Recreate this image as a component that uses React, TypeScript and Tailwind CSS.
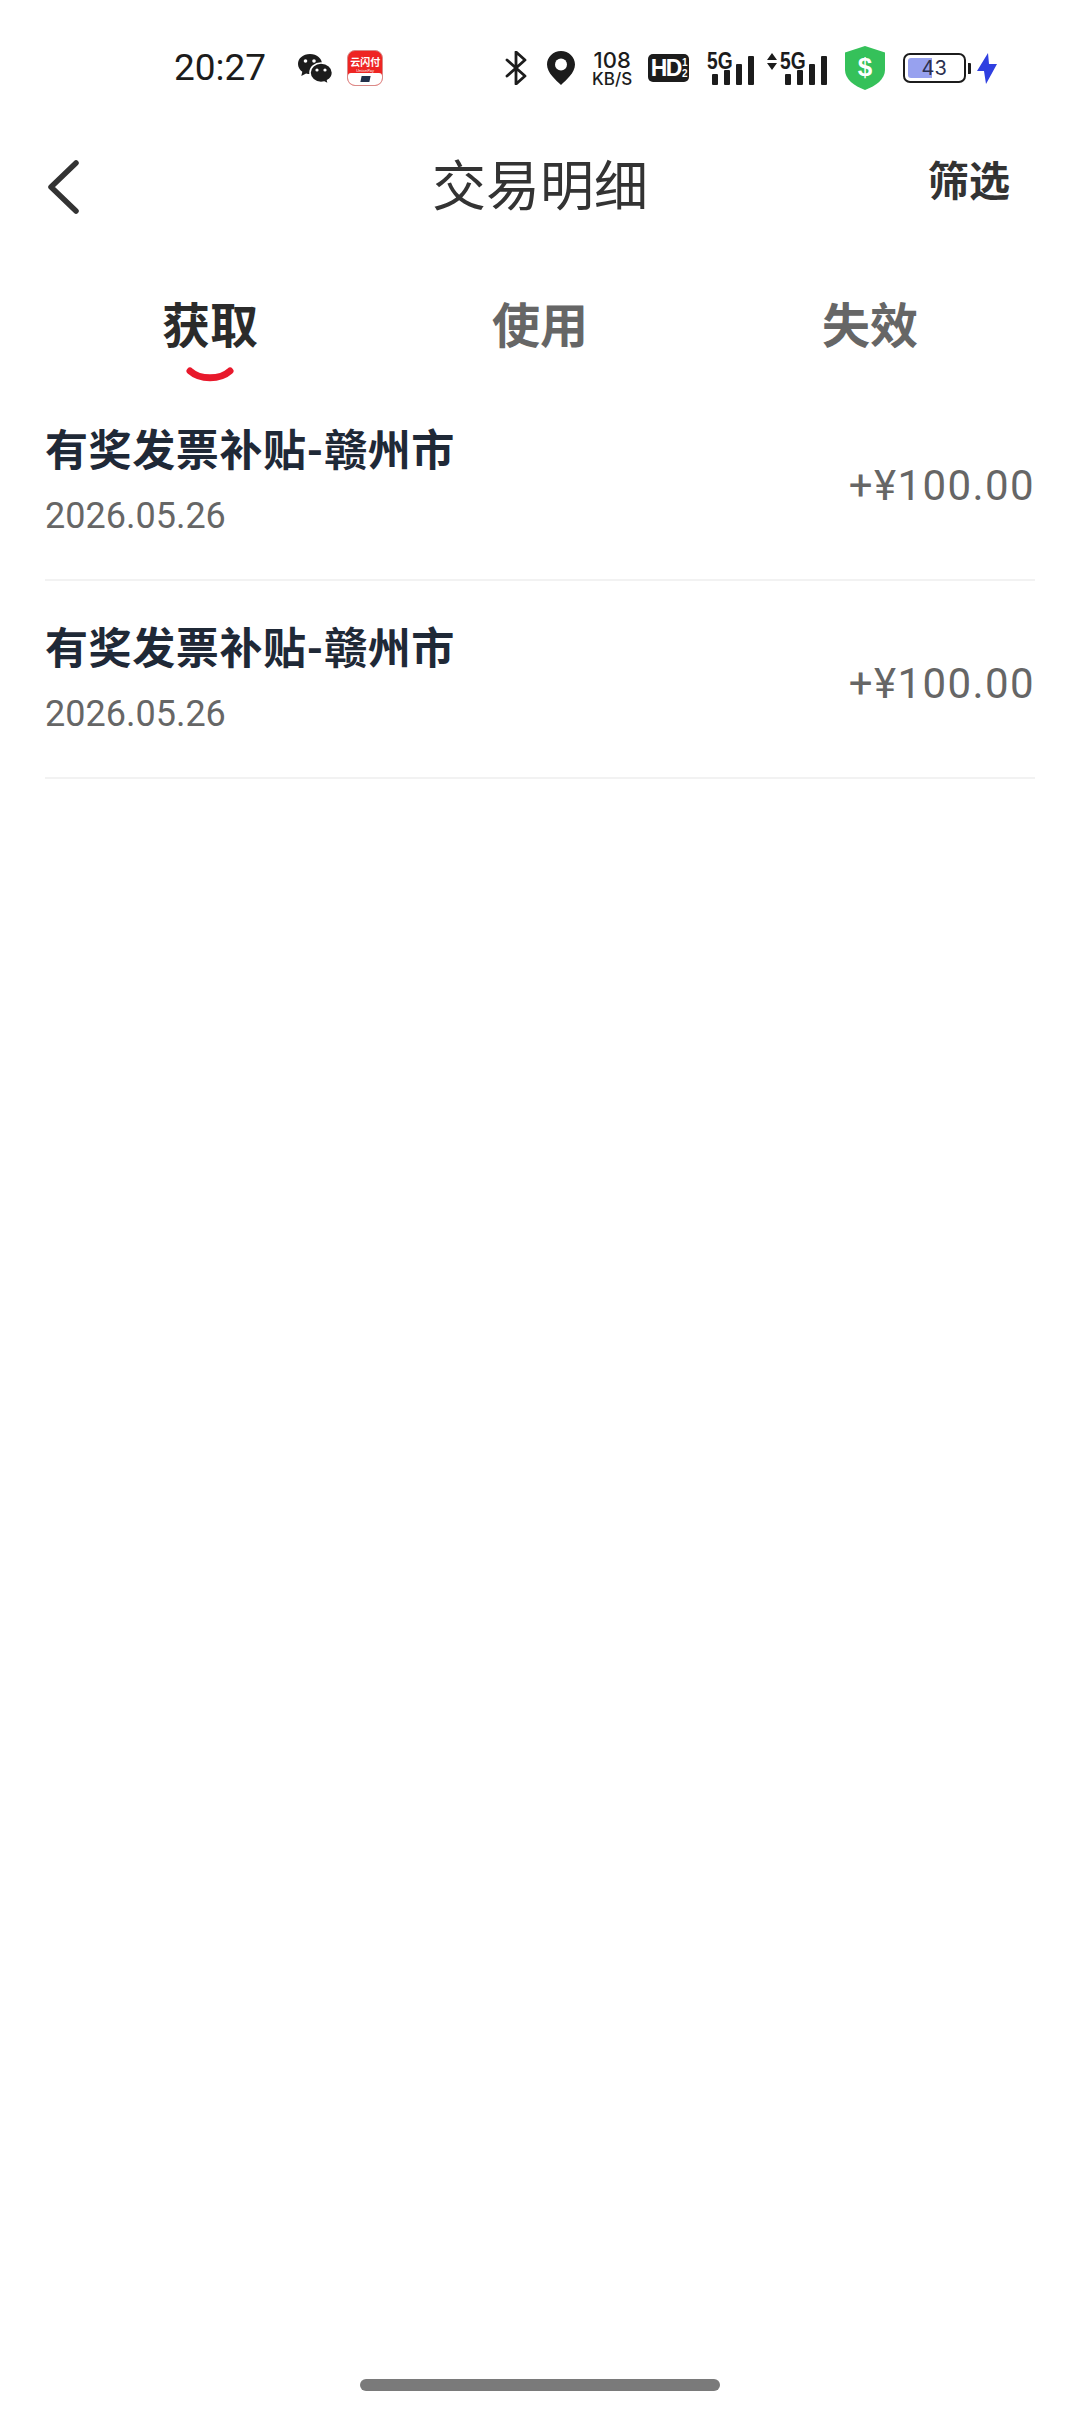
const cjk = "font-['Roboto','Noto_Sans_CJK_SC',sans-serif]";

const Wechat = () => (
   <svg width="36" height="32" viewBox="0 0 36 32" className="mt-[1px] shrink-0">
      <path d="M13 1C6 1 1 5.400 1 11c0 3.200 1.700 5.900 4.300 7.700L4.300 23l4.800-2.600c1.300.4 2.600.6 3.900.6 7 0 12-4.500 12-10S20 1 13 1z" fill="#1c1c1c" />
      <path d="M24 10c-6 0-11 4.200-11 9.700s5 9.800 11 9.800c1.200 0 2.300-.2 3.300-.5l4.200 2.300-.9-3.800c3-1.800 4.900-4.600 4.900-7.800 0-5.500-5-9.700-11.500-9.700z" fill="#1c1c1c" stroke="#fff" strokeWidth="1.600" />
      <circle cx="8.500" cy="8" r="1.800" fill="#fff" />
      <circle cx="17" cy="8" r="1.800" fill="#fff" />
      <circle cx="20" cy="17" r="1.600" fill="#fff" />
      <circle cx="28" cy="17" r="1.600" fill="#fff" />
   </svg>
);

const UnionApp = () => (
   <div className="ml-[14px] flex h-[36px] w-[36px] shrink-0 flex-col items-center overflow-hidden rounded-[8px] border border-[#d98a88] bg-[#ee2523]">
      <span className={`${cjk} mt-[6px] text-[10px] leading-[11px] font-bold whitespace-nowrap text-white`}>云闪付</span>
      <span className="text-[4px] leading-[5px] text-white">UnionPay</span>
      <div className="mt-auto flex h-[12px] w-full items-center justify-center rounded-t-[3px] bg-white">
         <div className="h-[6px] w-[9px] -skew-x-12 bg-[#22304a]" />
      </div>
   </div>
);

const Bluetooth = () => (
   <svg width="22" height="34" viewBox="0 0 22 34" className="ml-[122px] shrink-0" fill="none" stroke="#1c1c1c" strokeWidth="2.800" strokeLinecap="round" strokeLinejoin="round">
      <path d="M2 9l18 16-9 8V1l9 8L2 25" />
   </svg>
);

const Location = () => (
   <svg width="28" height="34" viewBox="0 0 28 34" className="ml-[20px] shrink-0">
      <path d="M14 0C6.300 0 0 6 0 13.500 0 22 9 29 14 34c5-5 14-12 14-20.500C28 6 21.700 0 14 0z" fill="#1c1c1c" />
      <circle cx="14" cy="13.500" r="6" fill="#fff" />
   </svg>
);

const Speed = () => (
   <div className="ml-[15px] flex w-[44px] shrink-0 flex-col items-center font-['Inter',sans-serif] text-[#1c1c1c]">
      <span className="text-[22px] leading-[22px] font-medium">108</span>
      <span className="text-[17px] leading-[17px] font-medium whitespace-nowrap">KB/S</span>
   </div>
);

const HdBadge = () => (
   <div className="ml-[14px] flex h-[28px] w-[41px] shrink-0 items-center justify-center rounded-[5px] bg-[#1c1c1c] pl-[1px] font-['Liberation_Sans',sans-serif] font-bold text-white">
      <span className="text-[23px] leading-[28px] tracking-[-1.500px]">HD</span>
      <div className="ml-[1px] flex flex-col items-center">
         <span className="text-[10px] leading-[11px]">1</span>
         <span className="text-[10px] leading-[11px]">2</span>
      </div>
   </div>
);

const Signal = ({ ml, arrows }: { ml: string; arrows?: boolean }) => (
   <div className={`${ml} flex shrink-0 items-start`}>
      {arrows && (
         <svg width="12" height="18" viewBox="0 0 12 18" className="mt-[1px] mr-[2px]" fill="#1c1c1c">
            <path d="M6 0l5 7H1zM6 17L1 10h10z" />
         </svg>
      )}
      <div className="relative h-[33px] w-[47px]">
         <span className="absolute top-[-2px] left-0 origin-left scale-x-[.8] font-['Liberation_Sans',sans-serif] text-[24px] leading-[22px] font-bold text-[#1c1c1c]">
            5G
         </span>
         <div className="absolute right-0 bottom-0 flex items-end gap-[6px]">
            <div className="h-[11px] w-[6px] rounded-[1px] bg-[#1c1c1c]" />
            <div className="h-[15px] w-[6px] rounded-[1px] bg-[#1c1c1c]" />
            <div className="h-[21px] w-[6px] rounded-[1px] bg-[#1c1c1c]" />
            <div className="h-[29px] w-[6px] rounded-[1px] bg-[#1c1c1c]" />
         </div>
      </div>
   </div>
);

const Shield = () => (
   <svg width="40" height="44" viewBox="0 0 40 44" className="ml-[18px] shrink-0">
      <path d="M20 0l20 6.500V24c0 9-9 16-20 20C9 40 0 33 0 24V6.500z" fill="#35c15a" />
      <text x="20" y="30" textAnchor="middle" fontFamily="Liberation Sans" fontWeight="700" fontSize="26" fill="#fff">$</text>
   </svg>
);

const Battery = () => (
   <div className="ml-[18px] flex shrink-0 items-center">
      <div className="relative h-[30px] w-[63px] rounded-[7px] border-[2.500px] border-[#1c1c1c] p-[3px]">
         <div className="h-full w-[24px] rounded-l-[3px] bg-[#97a1ef]" />
         <span className="absolute inset-0 flex items-center justify-center pr-[1px] font-['Inter',sans-serif] text-[20px] leading-none text-[#2b3050]">
            43
         </span>
      </div>
      <div className="ml-[2px] h-[11px] w-[3px] rounded-r-[1px] bg-[#1c1c1c]" />
   </div>
);

const Bolt = () => (
   <svg width="20" height="31" viewBox="0 0 20 31" className="ml-[6px] shrink-0" fill="#2f3fe0">
      <path d="M11 0L0 18h7l2 13 11-20h-8z" />
   </svg>
);

const StatusBar = () => (
   <div className="flex h-[136px] items-center pl-[174px]">
      <span className="mr-[31px] font-['Roboto',sans-serif] text-[37px] leading-[40px] text-[#1c1c1c]">20:27</span>
      <Wechat />
      <UnionApp />
      <Bluetooth />
      <Location />
      <Speed />
      <HdBadge />
      <Signal ml="ml-[18px]" />
      <Signal ml="ml-[12px]" arrows />
      <Shield />
      <Battery />
      <Bolt />
   </div>
);

const Header = () => (
   <div className="relative mt-[15px] flex h-[74px] items-center justify-center">
      <svg width="34" height="54" viewBox="0 0 34 54" className="absolute top-[9px] left-[46px]" fill="none" stroke="#333" strokeWidth="5.500" strokeLinecap="round" strokeLinejoin="round">
         <path d="M30 3L5 27l25 24" />
      </svg>
      <h1 className={`${cjk} text-[54px] leading-[74px] font-normal text-[#333]`}>交易明细</h1>
      <span className={`${cjk} absolute top-[8px] right-[70px] text-[41px] leading-[46px] font-bold text-[#333]`}>筛选</span>
   </div>
);

const tabs = ["获取", "使用", "失效"];

const Tabs = () => (
   <div className="mt-[70px] flex h-[88px] pr-[1px]">
      {tabs.map((t, i) => (
         <div key={t} className="relative flex w-[330px] justify-center first:ml-[45px]">
            <span className={`${cjk} text-[48px] leading-[64px] font-bold ${i === 0 ? "text-[#2b2b2b]" : "text-[#666]"}`}>{t}</span>
            {i === 0 && (
               <svg width="48" height="18" viewBox="0 0 48 18" className="absolute top-[71px] left-[141px]" fill="none" stroke="#e8192c" strokeWidth="7" strokeLinecap="round">
                  <path d="M4 5c10 9 30 9 40 0" />
               </svg>
            )}
         </div>
      ))}
   </div>
);

const Row = () => (
   <div className="flex h-[198px] items-center justify-between border-b-2 border-[#f2f2f2]">
      <div className="mb-[4px] flex flex-col">
         <span className={`${cjk} text-[43px] leading-[60px] font-bold tracking-[0.600px] text-[#1f2937]`}>有奖发票补贴-赣州市</span>
         <span className="mt-[14px] font-['Roboto',sans-serif] text-[36px] leading-[42px] text-[#666]">2026.05.26</span>
      </div>
      <span className="mt-[10px] font-['Roboto',sans-serif] text-[42px] leading-[50px] tracking-[1.400px] text-[#666]">+¥100.00</span>
   </div>
);

export default function App() {
   return (
      <div className="relative flex h-[2412px] w-[1080px] flex-col overflow-hidden bg-white">
         <StatusBar />
         <Header />
         <Tabs />
         <div className="mx-[45px] flex flex-col">
            <Row />
            <Row />
         </div>
         <div className="mx-auto mt-auto mb-[21px] h-[12px] w-[360px] rounded-full bg-[#7a7a7a]" />
      </div>
   );
}
